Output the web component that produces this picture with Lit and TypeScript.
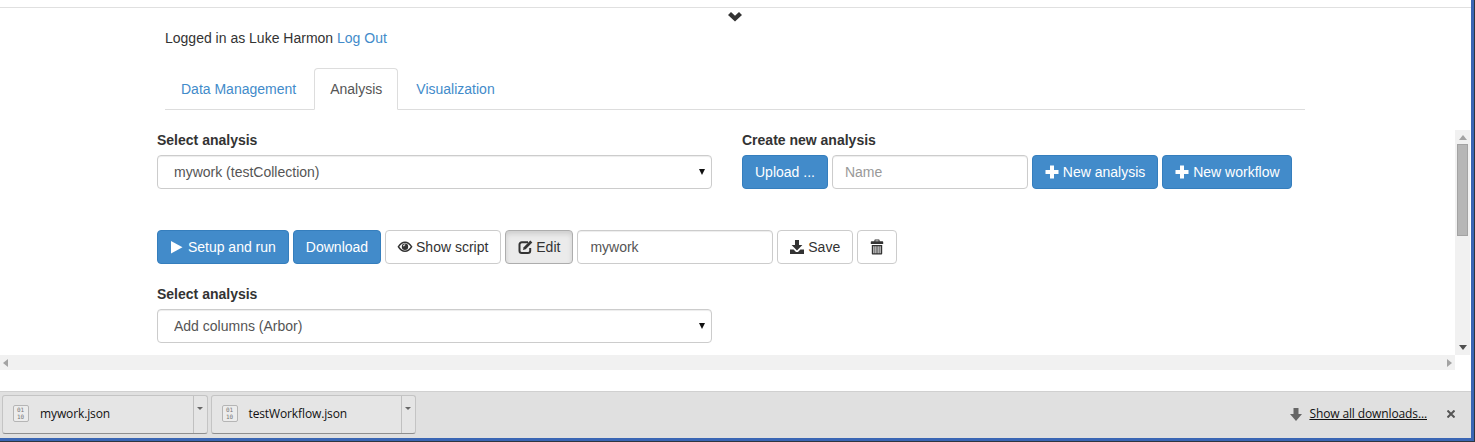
import { customElement } from "lit/decorators.js";
import { html, css, svg, LitElement } from "lit";

const icons = {
  play: svg`<path d="M1 1v12.500l11.500-6.200z" />`,
  plus: svg`<path d="M5 .5h4v4.500h4.500v4H9v4.500H5V9H.5V5H5z" />`,
  eye: svg`<path fill-rule="evenodd" d="M-.5 6.800C1.500 3.300 4.300 1.600 7 1.600s5.500 1.700 7.500 5.200c-2 3.500-4.800 5.200-7.500 5.200s-5.500-1.700-7.500-5.200zM1.300 6.800c1.500 2.400 3.600 3.800 5.700 3.800s4.200-1.400 5.700-3.800C11.200 4.400 9.100 3 7 3S2.800 4.400 1.300 6.800z" /><path fill-rule="evenodd" d="M7 3.600a3.200 3.200 0 1 1 0 6.400a3.200 3.200 0 0 1 0-6.400zM4.900 6.200h1.300a1 1 0 0 1 1-1V4.300a2.300 2.300 0 0 0-2.300 1.900z" />`,
  edit: svg`<path d="M10 2.300H3.800a2.300 2.300 0 0 0-2.300 2.300v6.100a2.300 2.300 0 0 0 2.300 2.300h6.100a2.300 2.300 0 0 0 2.300-2.300V8" fill="none" stroke="currentColor" stroke-width="2" /><path d="M12.300.6 14.300 2.600 7.700 9.200 4.900 10 5.700 7.200z" />`,
  save: svg`<path d="M5 0h4v5h3.400L7 10.400 1.600 5H5z" /><path d="M0 9.500h3.600L6 12h2l2.400-2.500H14V14H0z" />`,
  trash: svg`<path fill-rule="evenodd" d="M5.400-.5h3.200c.6 0 1 .4 1 1v.8h2.900c.4 0 .7.300.7.700V4H.8V2c0-.4.300-.7.700-.7h2.900V.5c0-.6.400-1 1-1zM5.400.5v.8h3.200V.5zM1.800 5h10.400v8.500c0 .6-.4 1-1 1H2.800c-.6 0-1-.4-1-1zM3.400 6.200v7.100h1V6.200zM5.400 6.200v7.100h1V6.200zM7.600 6.200v7.100h1V6.200zM9.600 6.200v7.100h1V6.200z" />`,
};

@customElement("app-root")
export class AppRoot extends LitElement {
  static styles = css`
    * {
      box-sizing: border-box;
    }

    :host {
      display: block;
      width: 1475px;
      height: 442px;
      overflow: hidden;
      background: #2f3640;
      font-family: "Liberation Sans", Arial, sans-serif;
      font-size: 14px;
      line-height: 20px;
      color: #333;
    }

    a {
      color: #428bca;
      text-decoration: none;
    }

    .window {
      width: 1474px;
      height: 441px;
      display: flex;
      flex-direction: column;
      background: #fff;
      border-right: 3px solid #3a66b4;
      border-bottom: 3px solid #3a66b4;
    }

    .drawer {
      height: 8px;
      border-bottom: 1px solid #e0e0e0;
      flex: none;
    }

    .handle {
      display: flex;
      justify-content: center;
      height: 14px;
      padding-top: 4px;
      padding-right: 1px;
    }

    .handle svg {
      width: 14px;
      height: 9px;
      fill: #333;
      overflow: visible;
    }

    .user {
      padding-left: 165px;
      height: 20px;
      margin-top: 6px;
    }

    .tabs {
      display: flex;
      gap: 2px;
      height: 42px;
      margin: 20px 165px 0 165px;
      border-bottom: 1px solid #ddd;
      width: 1140px;
    }

    .tab {
      height: 41px;
      padding: 10px 15px;
      border: 1px solid transparent;
      border-radius: 4px 4px 0 0;
    }

    .tab.active {
      height: 42px;
      color: #555;
      background: #fff;
      border-color: #ddd;
      border-bottom-color: #fff;
    }

    .scroller {
      display: flex;
      height: 225px;
      margin-top: 20px;
      flex: none;
    }

    .content {
      width: 1455px;
      overflow: hidden;
      padding-left: 157px;
    }

    .top-row {
      display: grid;
      grid-template-columns: 555px auto;
      column-gap: 30px;
    }

    label {
      display: block;
      font-weight: bold;
      margin-bottom: 5px;
    }

    .select {
      position: relative;
      width: 555px;
      height: 34px;
    }

    select {
      appearance: none;
      display: block;
      width: 100%;
      height: 34px;
      padding: 6px 16px;
      font: inherit;
      color: #555;
      background: #fff;
      border: 1px solid #ccc;
      border-radius: 4px;
      box-shadow: inset 0 1px 1px rgba(0, 0, 0, 0.075);
    }

    .select::after {
      content: "";
      position: absolute;
      right: 7px;
      top: 14px;
      border-left: 3px solid transparent;
      border-right: 3px solid transparent;
      border-top: 6px solid #111;
    }

    .bar {
      display: flex;
      gap: 4px;
    }

    .second {
      margin-top: 41px;
    }

    .third {
      margin-top: 20px;
    }

    .btn {
      height: 34px;
      padding: 6px 12px;
      font: inherit;
      color: #333;
      background: #fff;
      border: 1px solid #ccc;
      border-radius: 4px;
      white-space: nowrap;
    }

    .btn.primary {
      color: #fff;
      background: #428bca;
      border-color: #357ebd;
    }

    .btn.pressed {
      background: #ebebeb;
      border-color: #adadad;
      box-shadow: inset 0 3px 5px rgba(0, 0, 0, 0.125);
    }

    .btn.square {
      width: 40px;
    }

    .btn.workflow {
      width: 130px;
      padding-right: 0;
      text-align: left;
    }

    .glyph {
      display: inline-block;
      width: 14px;
      height: 14px;
      fill: currentColor;
      vertical-align: -2px;
      overflow: visible;
    }

    input {
      width: 196px;
      height: 34px;
      padding: 6px 12px;
      font: inherit;
      color: #555;
      background: #fff;
      border: 1px solid #ccc;
      border-radius: 4px;
      box-shadow: inset 0 1px 1px rgba(0, 0, 0, 0.075);
    }

    input::placeholder {
      color: #999;
    }

    .vscroll {
      position: relative;
      width: 15px;
      background: #f1f1f1;
    }

    .thumb {
      position: absolute;
      left: 2px;
      top: 14px;
      width: 11px;
      height: 92px;
      background: #b6b6b6;
      border: 1px solid #a3a3a3;
    }

    .arrow {
      position: absolute;
      width: 0;
      height: 0;
      border: 4px solid transparent;
    }

    .arrow.up {
      left: 4px;
      top: 5px;
      border-top: 0;
      border-bottom: 5px solid #a3a3a3;
    }

    .arrow.down {
      left: 4px;
      bottom: 5px;
      border-bottom: 0;
      border-top: 5px solid #505050;
    }

    .hscroll {
      position: relative;
      width: 1455px;
      height: 15px;
      background: #f1f1f1;
      flex: none;
    }

    .arrow.left {
      left: 3px;
      top: 4px;
      border-left: 0;
      border-right: 5px solid #a3a3a3;
    }

    .arrow.right {
      right: 3px;
      top: 4px;
      border-right: 0;
      border-left: 5px solid #a3a3a3;
    }

    .downloads {
      display: flex;
      align-items: center;
      gap: 3px;
      height: 47px;
      margin-top: 21px;
      padding: 0 0 2px 2px;
      background: #e0e0e0;
      border-top: 1px solid #d0d0d0;
      font-family: "Open Sans", sans-serif;
      font-size: 12px;
      letter-spacing: -0.12px;
      color: #111;
      flex: none;
    }

    .item {
      display: flex;
      width: 205.500px;
      height: 39px;
      background: #e5e5e5;
      border: 1px solid #c4c4c4;
      border-bottom: 1px solid #8f8f8f;
      border-radius: 3px;
    }

    .item-main {
      flex: 1;
      display: flex;
      align-items: center;
      gap: 10px;
      padding-left: 10px;
      border-right: 1px solid #c0c0c0;
    }

    .file {
      width: 17px;
      height: 18px;
    }

    .file text {
      font-family: "DejaVu Sans Mono", monospace;
      font-size: 6px;
      letter-spacing: 0;
      fill: #777;
    }

    .item-menu {
      position: relative;
      width: 13px;
    }

    .arrow.menu {
      left: 3px;
      top: 11px;
      border-width: 3px;
      border-bottom: 0;
      border-top: 3px solid #666;
    }

    .all {
      margin-left: auto;
      display: flex;
      align-items: center;
      gap: 7px;
      padding-right: 16px;
    }

    .all a {
      color: #111;
      text-decoration: underline;
    }

    .all svg {
      width: 12px;
      height: 13px;
      fill: #666;
    }

    .all svg.close {
      width: 8px;
      height: 8px;
      margin-left: 13px;
      stroke: #555;
      stroke-width: 2;
    }
  `;

  private glyph(d: unknown) {
    return html`<svg class="glyph" viewBox="0 0 14 14">${d}</svg>`;
  }

  private download(name: string) {
    return html`
      <div class="item">
        <div class="item-main">
          <svg class="file" viewBox="0 0 17 18">
            <rect x="0.500" y="0.500" width="15" height="16" rx="1.500" fill="#ececec" stroke="#b5b5b5" />
            <text x="4" y="7">01</text>
            <text x="4" y="13.500">10</text>
          </svg>
          <span>${name}</span>
        </div>
        <div class="item-menu"><span class="arrow menu"></span></div>
      </div>
    `;
  }

  render() {
    return html`
      <div class="window">
        <div class="drawer"></div>
        <div class="handle">
          <svg viewBox="0 0 14 9"><path d="M0 3 3 0 7 3.800 11 0 14 3 7 9.500z" /></svg>
        </div>
        <div class="user">Logged in as Luke Harmon <a href="#">Log Out</a></div>
        <nav class="tabs">
          <a class="tab" href="#">Data Management</a>
          <a class="tab active" href="#">Analysis</a>
          <a class="tab" href="#">Visualization</a>
        </nav>
        <div class="scroller">
          <div class="content">
            <div class="top-row">
              <div>
                <label>Select analysis</label>
                <div class="select">
                  <select><option>mywork (testCollection)</option></select>
                </div>
              </div>
              <div>
                <label>Create new analysis</label>
                <div class="bar">
                  <button class="btn primary">Upload ...</button>
                  <input placeholder="Name" />
                  <button class="btn primary">${this.glyph(icons.plus)} New analysis</button>
                  <button class="btn primary workflow">${this.glyph(icons.plus)} New workflow</button>
                </div>
              </div>
            </div>
            <div class="bar second">
              <button class="btn primary">${this.glyph(icons.play)} Setup and run</button>
              <button class="btn primary">Download</button>
              <button class="btn">${this.glyph(icons.eye)} Show script</button>
              <button class="btn pressed">${this.glyph(icons.edit)} Edit</button>
              <input value="mywork" />
              <button class="btn">${this.glyph(icons.save)} Save</button>
              <button class="btn square">${this.glyph(icons.trash)}</button>
            </div>
            <div class="third">
              <label>Select analysis</label>
              <div class="select">
                <select><option>Add columns (Arbor)</option></select>
              </div>
            </div>
          </div>
          <div class="vscroll">
            <span class="arrow up"></span>
            <div class="thumb"></div>
            <span class="arrow down"></span>
          </div>
        </div>
        <div class="hscroll">
          <span class="arrow left"></span>
          <span class="arrow right"></span>
        </div>
        <div class="downloads">
          ${this.download("mywork.json")} ${this.download("testWorkflow.json")}
          <div class="all">
            <svg viewBox="0 0 12 13"><path d="M3.500 0h5v6H12l-6 7-6-7h3.500z" /></svg>
            <a href="#">Show all downloads...</a>
            <svg class="close" viewBox="0 0 8 8"><path d="M.5.5l7 7M7.500.5l-7 7" /></svg>
          </div>
        </div>
      </div>
    `;
  }
}
